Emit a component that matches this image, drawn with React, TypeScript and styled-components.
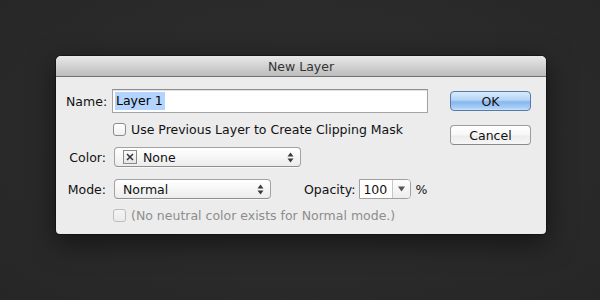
import React from "react";
import styled, { createGlobalStyle, css } from "styled-components";

const Global = createGlobalStyle`
  html, body { margin: 0; padding: 0; background: #2b2b2b; }
  body { font-family: "Lucida Grande", "DejaVu Sans", sans-serif; font-size: 12.5px; color: #111; }
`;

const Page = styled.div`
  width: 600px;
  height: 300px;
  display: flex;
  align-items: flex-start;
  padding: 56px 0 0 56px;
  box-sizing: border-box;
  background: radial-gradient(ellipse at 50% 45%, #2d2d2d 0%, #2a2a2a 60%, #262626 100%);
  overflow: hidden;
`;

const Dialog = styled.div`
  width: 490px;
  height: 178px;
  background: #ececec;
  border-radius: 5px 5px 4px 4px;
  box-shadow: 0 8px 28px rgba(0, 0, 0, 0.55), 0 0 0 1px rgba(0, 0, 0, 0.35);
  display: flex;
  flex-direction: column;
  overflow: hidden;
`;

const TitleBar = styled.div`
  height: 20px;
  border-bottom: 1px solid #727272;
  background: linear-gradient(#e9e9e9, #d2d2d2 50%, #bcbcbc);
  display: flex;
  align-items: center;
  justify-content: center;
  font-size: 12.5px;
  color: #333;
`;

const Body = styled.div`
  flex: 1;
  display: flex;
  justify-content: space-between;
  padding: 12px 15px 0 10px;
`;

const Form = styled.div`
  display: flex;
  flex-direction: column;
  gap: 8px;
`;

const Row = styled.div<{ $h: number; $mt?: number }>`
  height: ${(p) => p.$h}px;
  margin-top: ${(p) => p.$mt ?? 0}px;
  display: flex;
  align-items: center;
`;

const Label = styled.div`
  width: 40px;
  text-align: right;
  margin-right: 6px;
  white-space: nowrap;
  color: #111;
`;

const Spacer = styled.div`
  width: 47px;
`;

const TextField = styled.div`
  width: 316px;
  height: 24px;
  box-sizing: border-box;
  background: #fff;
  border: 1px solid #a4a4a4;
  border-top-color: #8e8e8e;
  box-shadow: inset 0 1px 1px rgba(0, 0, 0, 0.12);
  display: flex;
  align-items: center;
  padding-left: 2px;
`;

const Selection = styled.span`
  background: #b3d4fc;
  height: 18px;
  line-height: 18px;
  padding: 0 2px 0 1px;
  color: #000;
`;

const Box = styled.div<{ $disabled?: boolean }>`
  width: 13px;
  height: 13px;
  box-sizing: border-box;
  border-radius: 3px;
  border: 1px solid ${(p) => (p.$disabled ? "#bdbdbd" : "#8c8c8c")};
  background: ${(p) =>
    p.$disabled ? "linear-gradient(#f4f4f4, #ebebeb)" : "linear-gradient(#ffffff, #f0f0f0)"};
  margin-right: 5px;
`;

const CheckText = styled.span<{ $disabled?: boolean }>`
  color: ${(p) => (p.$disabled ? "#8d8d8d" : "#111")};
`;

const Popup = styled.div<{ $w: number }>`
  width: ${(p) => p.$w}px;
  height: 20px;
  margin-left: 2px;
  box-sizing: border-box;
  border: 1px solid #a2a2a2;
  border-bottom-color: #8f8f8f;
  border-radius: 4px;
  background: linear-gradient(#ffffff, #f6f6f6 50%, #ececec);
  box-shadow: 0 1px 0 rgba(255, 255, 255, 0.6);
  display: flex;
  align-items: center;
  padding: 0 6px 0 8px;
`;

const PopupText = styled.span`
  flex: 1;
  color: #111;
`;

const Swatch = styled.div`
  width: 14px;
  height: 14px;
  box-sizing: border-box;
  border: 1px solid #8a8a8a;
  background: linear-gradient(#fafafa, #e6e6e6);
  display: flex;
  align-items: center;
  justify-content: center;
  margin-right: 6px;
`;

const OpacityLabel = styled.span`
  margin-left: 33px;
  margin-right: 4px;
`;

const Combo = styled.div`
  width: 52px;
  height: 20px;
  box-sizing: border-box;
  border: 1px solid #a0a0a0;
  border-radius: 0 4px 4px 0;
  background: #fff;
  display: flex;
  overflow: hidden;
`;

const ComboText = styled.div`
  flex: 1;
  padding-left: 3px;
  display: flex;
  align-items: center;
`;

const ComboButton = styled.div`
  width: 17px;
  border-left: 1px solid #c6c6c6;
  background: linear-gradient(#fdfdfd, #ededed);
  display: flex;
  align-items: center;
  justify-content: center;
`;

const Percent = styled.span`
  margin-left: 4px;
`;

const Buttons = styled.div`
  display: flex;
  flex-direction: column;
  gap: 14px;
  padding-top: 2px;
`;

const Button = styled.div<{ $primary?: boolean }>`
  width: 81px;
  height: 20px;
  box-sizing: border-box;
  border-radius: 4px;
  display: flex;
  align-items: center;
  justify-content: center;
  color: #111;
  ${(p) =>
    p.$primary
      ? css`
          border: 1px solid #5b79a8;
          background: linear-gradient(#d9ebfb, #b4d4f6 45%, #86b7ef 55%, #a6ccf5 85%, #c7e2fb);
        `
      : css`
          border: 1px solid #9c9c9c;
          border-bottom-color: #8a8a8a;
          background: linear-gradient(#ffffff, #f7f7f7 50%, #ececec 55%, #f6f6f6);
        `}
`;

const Arrows = () => (
  <svg width="7" height="11" viewBox="0 0 7 11">
    <path d="M3.5 0.5 L6.5 4.5 H0.5 Z" fill="#3a3a3a" />
    <path d="M3.5 10.5 L6.5 6.5 H0.5 Z" fill="#3a3a3a" />
  </svg>
);

const Cross = () => (
  <svg width="8" height="8" viewBox="0 0 8 8">
    <path d="M1 1 L7 7 M7 1 L1 7" stroke="#333" strokeWidth="1.5" />
  </svg>
);

const Down = () => (
  <svg width="7" height="6" viewBox="0 0 7 6">
    <path d="M0 0.5 H7 L3.5 5.5 Z" fill="#555" />
  </svg>
);

export default function App() {
  return (
    <>
      <Global />
      <Page>
        <Dialog>
          <TitleBar>New Layer</TitleBar>
          <Body>
            <Form>
              <Row $h={24}>
                <Label>Name:</Label>
                <TextField>
                  <Selection>Layer 1</Selection>
                </TextField>
              </Row>
              <Row $h={16}>
                <Spacer />
                <Box />
                <CheckText>Use Previous Layer to Create Clipping Mask</CheckText>
              </Row>
              <Row $h={24}>
                <Label>Color:</Label>
                <Popup $w={187}>
                  <Swatch>
                    <Cross />
                  </Swatch>
                  <PopupText>None</PopupText>
                  <Arrows />
                </Popup>
              </Row>
              <Row $h={24}>
                <Label>Mode:</Label>
                <Popup $w={157}>
                  <PopupText>Normal</PopupText>
                  <Arrows />
                </Popup>
                <OpacityLabel>Opacity:</OpacityLabel>
                <Combo>
                  <ComboText>100</ComboText>
                  <ComboButton>
                    <Down />
                  </ComboButton>
                </Combo>
                <Percent>%</Percent>
              </Row>
              <Row $h={16} $mt={-2}>
                <Spacer />
                <Box $disabled />
                <CheckText $disabled>(No neutral color exists for Normal mode.)</CheckText>
              </Row>
            </Form>
            <Buttons>
              <Button $primary>OK</Button>
              <Button>Cancel</Button>
            </Buttons>
          </Body>
        </Dialog>
      </Page>
    </>
  );
}
